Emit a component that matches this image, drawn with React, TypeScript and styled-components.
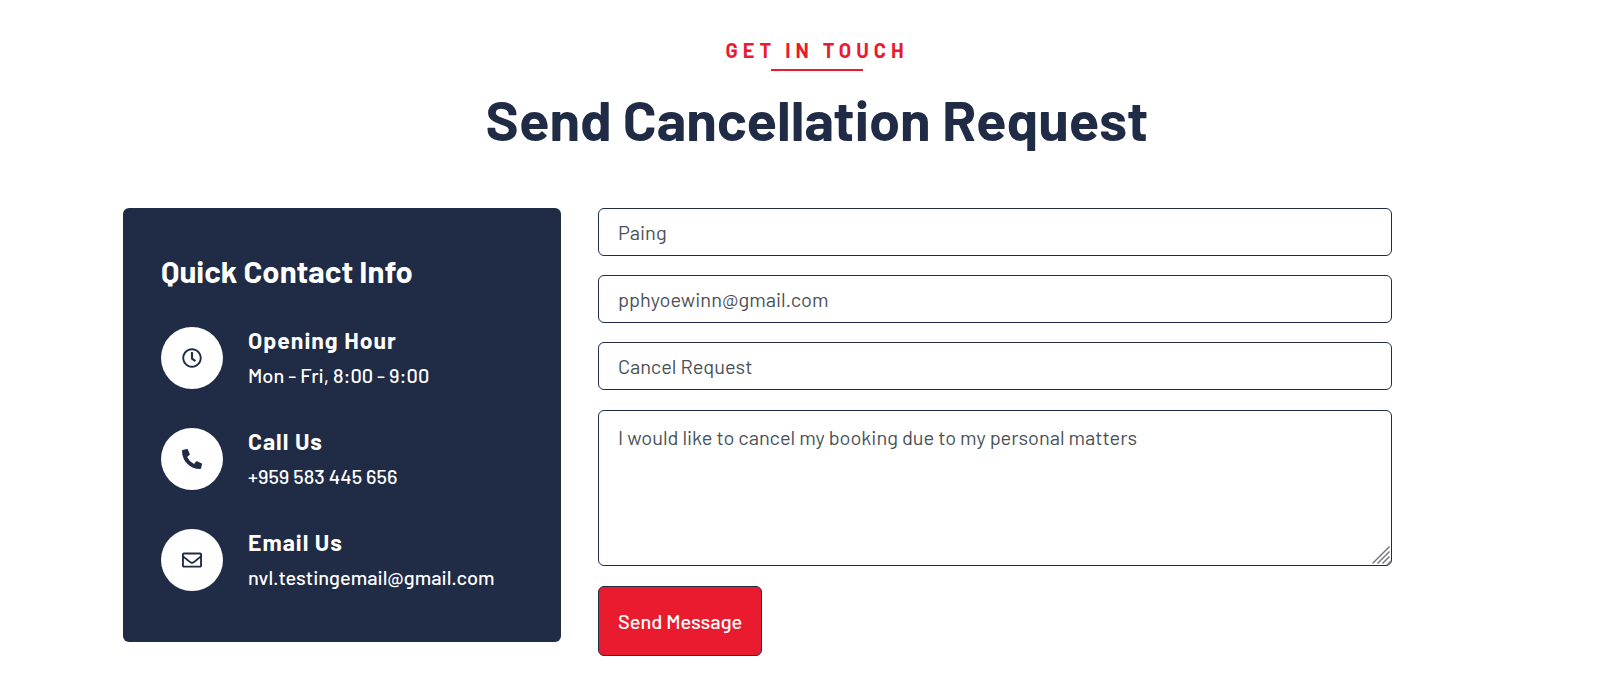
import React from "react";
import styled, { createGlobalStyle } from "styled-components";
import { FaPhoneAlt, FaRegClock, FaRegEnvelope } from "react-icons/fa";

const navy = "#202b45";
const red = "#ea1b2f";

const GlobalStyle = createGlobalStyle`
  *, *::before, *::after { box-sizing: border-box; }
  body {
    margin: 0;
    background: #fff;
    color: ${navy};
    font-family: Barlow, Roboto, "Liberation Sans", sans-serif;
    font-size: 20px;
    line-height: 30px;
  }
`;

const Page = styled.main`
  padding: 35px 0 24px 37px;
`;

const Container = styled.div`
  max-width: 1388px;
  margin: 0 auto;
`;

const Header = styled.header`
  display: flex;
  flex-direction: column;
  align-items: center;
  text-align: center;
`;

const Eyebrow = styled.p`
  margin: 0;
  padding-bottom: 4px;
  color: ${red};
  font-size: 20px;
  font-weight: 700;
  letter-spacing: 5px;
  line-height: 30px;
  text-transform: uppercase;
`;

const Rule = styled.div`
  width: 92px;
  height: 2px;
  background: ${red};
`;

const Title = styled.h1`
  margin: 14px 0 56px;
  font-size: 56px;
  font-weight: 700;
  line-height: 67px;
`;

const Row = styled.div`
  display: grid;
  grid-template-columns: repeat(12, minmax(0, 1fr));
  gap: 37px;
  align-items: start;
`;

const Card = styled.section`
  grid-column: span 4;
  padding: 44px 38px 50px;
  border-radius: 6px;
  background: ${navy};
  color: #fff;
`;

const CardTitle = styled.h2`
  margin: 0 0 36px;
  font-size: 31px;
  font-weight: 700;
  line-height: 38px;
`;

const ContactList = styled.ul`
  display: grid;
  gap: 37px;
  margin: 0;
  padding: 0;
  list-style: none;
`;

const ContactItem = styled.li`
  display: flex;
  align-items: center;
  gap: 25px;
`;

const IconCircle = styled.span`
  display: flex;
  flex: none;
  align-items: center;
  justify-content: center;
  width: 62px;
  height: 62px;
  border-radius: 50%;
  background: #fff;
  color: ${navy};
  font-size: 20px;
`;

const ContactLabel = styled.h3`
  margin: 0 0 6px;
  font-size: 23px;
  font-weight: 700;
  letter-spacing: 1px;
  line-height: 28px;
`;

const ContactValue = styled.p`
  margin: 0;
  font-size: 20px;
  font-weight: 500;
  line-height: 30px;
`;

const Form = styled.form`
  grid-column: span 7;
  display: flex;
  flex-direction: column;
  align-items: flex-start;
  gap: 20px;
`;

const Input = styled.input`
  display: block;
  width: 100%;
  height: 48px;
  padding: 0 19px;
  border: 1px solid ${navy};
  border-radius: 6px;
  background: #fff;
  color: #495057;
  font: inherit;
`;

const Fields = styled.div`
  display: grid;
  gap: 19px;
  width: 100%;
`;

const MessageField = styled.div`
  position: relative;
  width: 100%;
`;

const Message = styled.textarea`
  display: block;
  width: 100%;
  height: 156px;
  padding: 11px 19px;
  border: 1px solid ${navy};
  border-radius: 6px;
  background: #fff;
  color: #495057;
  font: inherit;
  resize: none;
`;

const Grip = styled.svg`
  position: absolute;
  right: 0;
  bottom: 0;
  width: 21px;
  height: 21px;
  pointer-events: none;
`;

const Submit = styled.button`
  height: 70px;
  padding: 0 19px;
  border: 1px solid ${navy};
  border-radius: 6px;
  background: ${red};
  color: #fff;
  font: inherit;
  font-weight: 500;
  cursor: pointer;
`;

const contacts = [
  { icon: FaRegClock, label: "Opening Hour", value: "Mon - Fri, 8:00 - 9:00" },
  { icon: FaPhoneAlt, label: "Call Us", value: "+959 583 445 656" },
  { icon: FaRegEnvelope, label: "Email Us", value: "nvl.testingemail@gmail.com" },
];

export default function App() {
  return (
    <Page>
      <GlobalStyle />
      <Container>
        <Header>
          <Eyebrow>Get in touch</Eyebrow>
          <Rule />
          <Title>Send Cancellation Request</Title>
        </Header>
        <Row>
          <Card>
            <CardTitle>Quick Contact Info</CardTitle>
            <ContactList>
              {contacts.map(({ icon: Icon, label, value }) => (
                <ContactItem key={label}>
                  <IconCircle>
                    <Icon aria-hidden />
                  </IconCircle>
                  <div>
                    <ContactLabel>{label}</ContactLabel>
                    <ContactValue>{value}</ContactValue>
                  </div>
                </ContactItem>
              ))}
            </ContactList>
          </Card>
          <Form onSubmit={(e) => e.preventDefault()}>
            <Fields>
              <Input type="text" aria-label="Name" defaultValue="Paing" />
              <Input type="email" aria-label="Email" defaultValue="pphyoewinn@gmail.com" />
              <Input type="text" aria-label="Subject" defaultValue="Cancel Request" />
            </Fields>
            <MessageField>
              <Message
                aria-label="Message"
                defaultValue="I would like to cancel my booking due to my personal matters"
              />
              <Grip viewBox="0 0 21 21" fill="none" stroke="#77777c" strokeWidth="1.5" aria-hidden>
                <path d="M1.5 18.5 18.5 1.5M6.5 18.5l12-12M11.5 18.5l7-7M16 20l4-4" />
              </Grip>
            </MessageField>
            <Submit type="submit">Send Message</Submit>
          </Form>
        </Row>
      </Container>
    </Page>
  );
}
